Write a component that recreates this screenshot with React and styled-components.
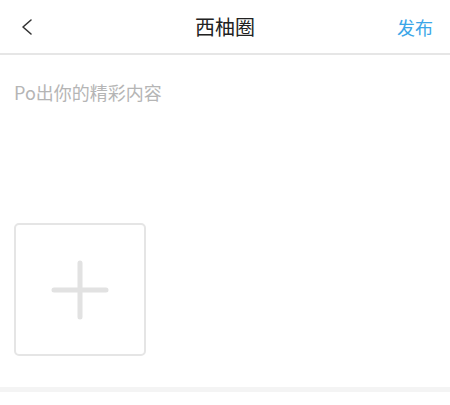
import React from "react";
import styled, { createGlobalStyle } from "styled-components";

const Global = createGlobalStyle`
  html, body { margin: 0; padding: 0; background: #fff; }
  body { font-family: "Noto Sans CJK SC", "Noto Sans", sans-serif; }
`;

const Page = styled.div`
  width: 450px;
  display: flex;
  flex-direction: column;
  background: #fff;
`;

const Header = styled.header`
  height: 53px;
  display: grid;
  grid-template-columns: 80px 1fr 80px;
  align-items: center;
  border-bottom: 2px solid #e6e6e6;
  box-sizing: content-box;
`;

const Back = styled.button`
  border: 0;
  background: none;
  padding: 0 0 0 20px;
  display: flex;
  align-items: center;
  justify-self: start;
  height: 100%;
`;

const Title = styled.h1`
  margin: 0;
  text-align: center;
  font-size: 20px;
  font-weight: 400;
  color: #222;
  line-height: 1;
`;

const Publish = styled.button`
  border: 0;
  background: none;
  padding: 0 17px 0 0;
  justify-self: end;
  font-family: inherit;
  font-size: 18px;
  color: #3ba6e8;
  line-height: 1;
`;

const Body = styled.main`
  padding: 25px 14px 31px;
  display: flex;
  flex-direction: column;
  gap: 119px;
`;

const Placeholder = styled.div`
  font-size: 18px;
  line-height: 24px;
  color: #b5b5b5;
  height: 24px;
`;

const AddBox = styled.button`
  width: 132px;
  height: 133px;
  border: 2px solid #e5e5e5;
  border-radius: 5px;
  background: #fff;
  padding: 0;
  display: flex;
  align-items: center;
  justify-content: center;
  box-sizing: border-box;
`;

const Divider = styled.div`
  height: 5px;
  background: #f4f4f4;
`;

const Rest = styled.div`
  height: 15px;
`;

export default function App() {
  return (
    <Page>
      <Global />
      <Header>
        <Back aria-label="back">
          <svg width="16" height="18" viewBox="0 0 16 18">
            <path d="M12 2 L4 9 L12 16" fill="none" stroke="#333" strokeWidth="1.6" strokeLinecap="round" strokeLinejoin="round" transform="translate(-1,0)" />
          </svg>
        </Back>
        <Title>西柚圈</Title>
        <Publish>发布</Publish>
      </Header>
      <Body>
        <Placeholder>Po出你的精彩内容</Placeholder>
        <AddBox aria-label="add">
          <svg width="58" height="60" viewBox="0 0 58 60">
            <path d="M29 3 V57 M3 30 H55" stroke="#e2e2e2" strokeWidth="5" strokeLinecap="round" />
          </svg>
        </AddBox>
      </Body>
      <Divider />
      <Rest />
    </Page>
  );
}
